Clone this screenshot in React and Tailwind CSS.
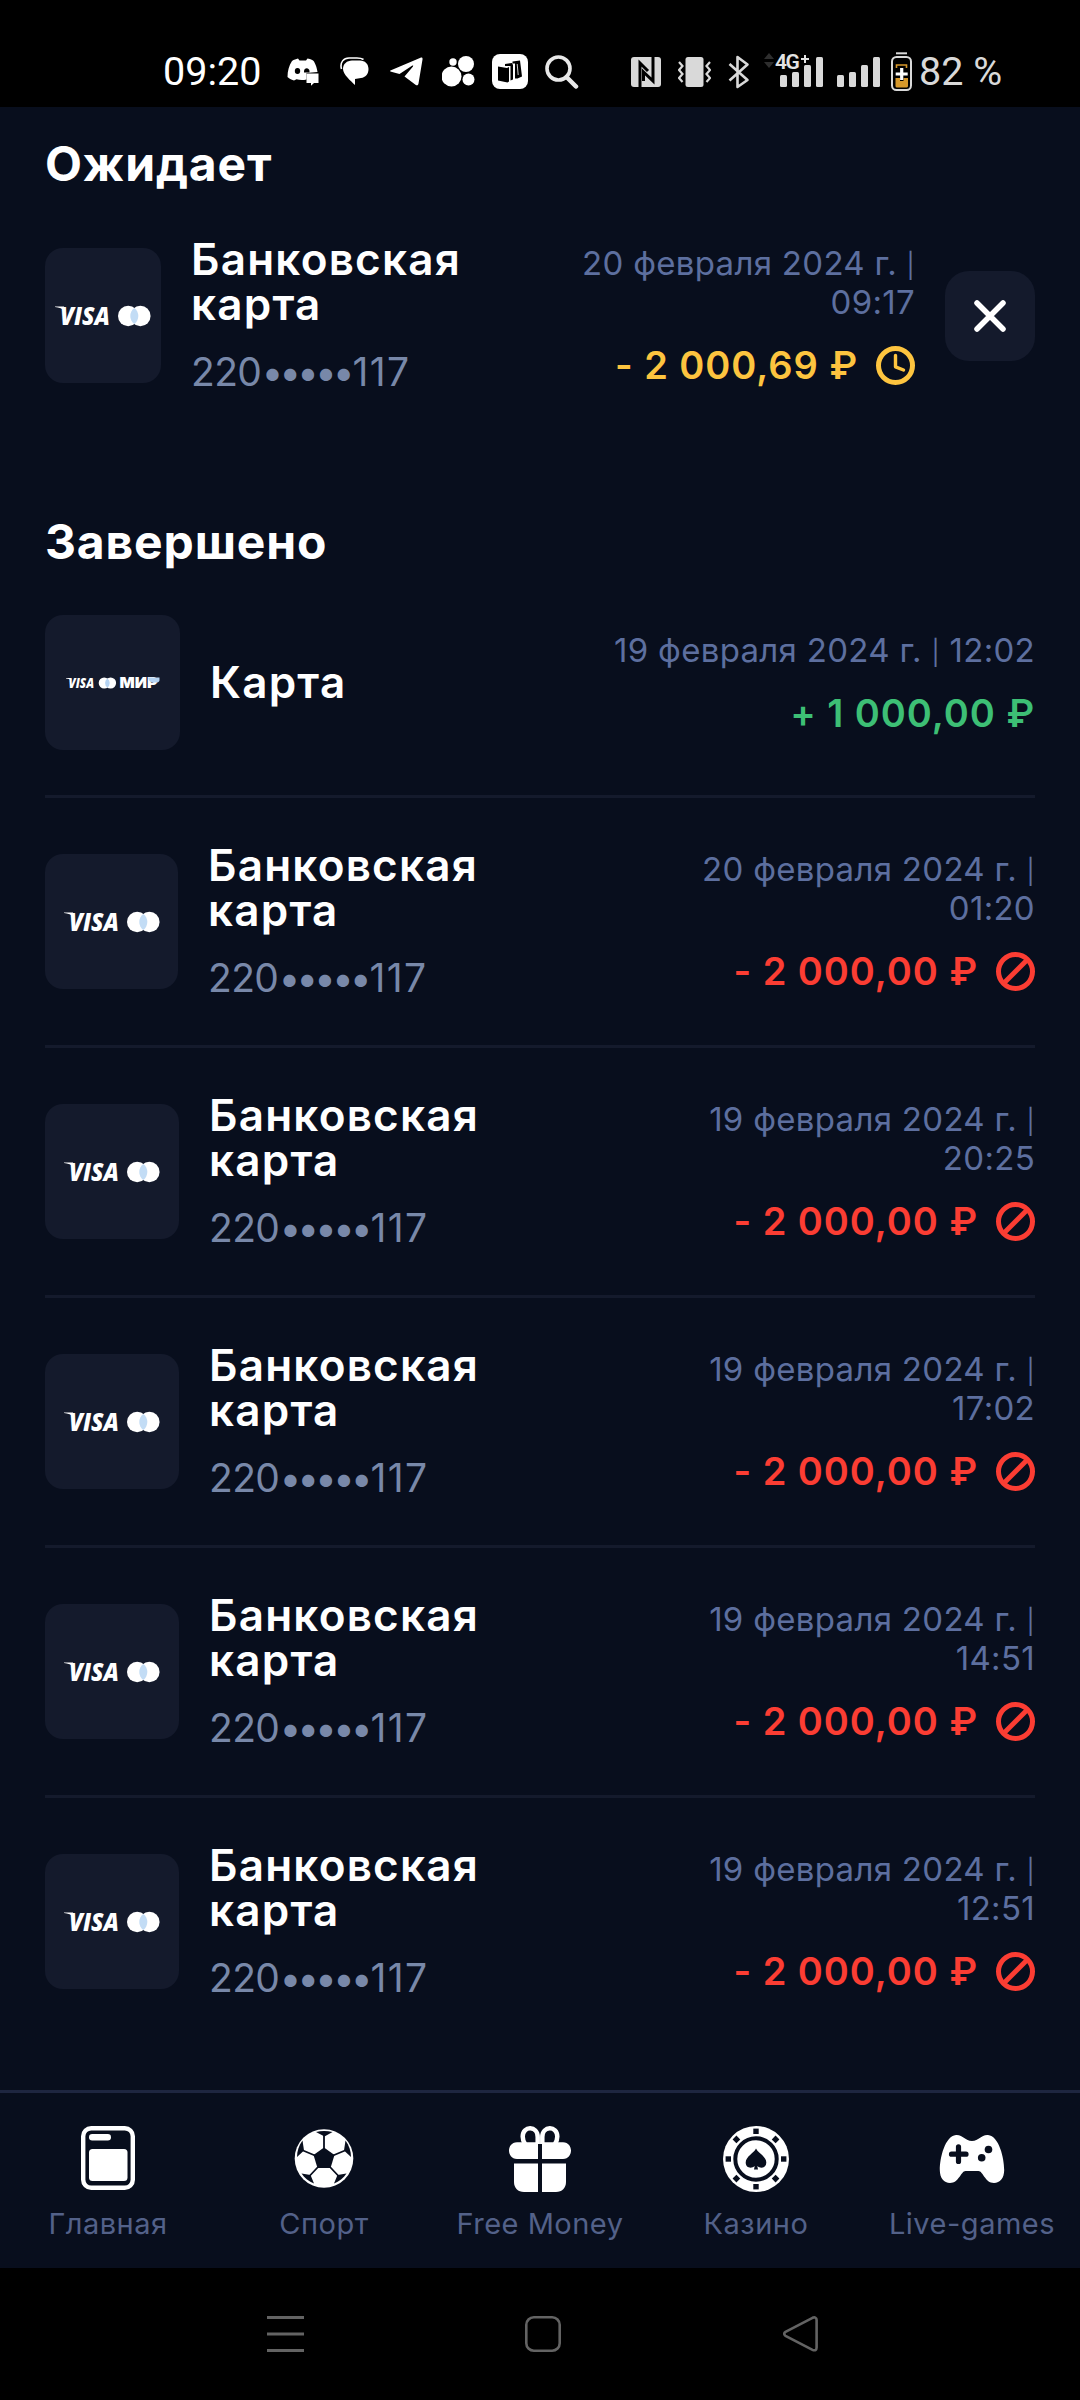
import React from 'react';
import { clsx } from 'clsx';

const COMPLETED = [
  { id: 1, date: '20 февраля 2024 г.', time: '01:20', tile: 'w-[133px]' },
  { id: 2, date: '19 февраля 2024 г.', time: '20:25', tile: 'w-[134px]' },
  { id: 3, date: '19 февраля 2024 г.', time: '17:02', tile: 'w-[134px]' },
  { id: 4, date: '19 февраля 2024 г.', time: '14:51', tile: 'w-[134px]' },
  { id: 5, date: '19 февраля 2024 г.', time: '12:51', tile: 'w-[134px]' },
];

const SignalBars = ({ className }) => (
  <svg width="43" height="30" viewBox="0 0 43 30" fill="#d9d9d9" className={className}>
    <rect x="0" y="18" width="7" height="12" rx="1.5" />
    <rect x="12" y="15" width="7" height="15" rx="1.5" />
    <rect x="24" y="8" width="7" height="22" rx="1.5" />
    <rect x="36" y="0" width="7" height="30" rx="1.5" />
  </svg>
);

const StatusBar = () => (
  <header className="flex h-[107px] items-center bg-black pt-[36px] pl-[163px] font-['Roboto'] text-white">
    <span className="w-[98px] text-[39.5px] leading-[40px] whitespace-nowrap">09:20</span>
    {/* discord */}
    <svg width="32" height="28" viewBox="0 0 32 28" className="ml-[26px]">
      <path d="M11 0.5 L12.5 2.5 H19 L20.5 0.5 C24 1 26 2 27 3.5 C29 7 30 10.5 30.5 14 L19.5 15 V21.5 C16 22.3 12.5 22.2 9.5 21.2 L7 22.5 C4 21.5 2 20.5 0.5 19 C0.5 13 2 7.5 5 3 C7 1.5 9 1 11 0.5 Z" fill="#fff" />
      <ellipse cx="10.5" cy="13" rx="2.7" ry="3" fill="#000" />
      <path d="M17 13.5 C17 9.5 22 9 22.5 13 V14.5 H17 Z" fill="#000" />
      <path d="M19.5 15.5 H31.5 V25 H27 L24 27.8 V25 H19.5 Z" fill="#fff" />
    </svg>
    {/* messages */}
    <svg width="29" height="29" viewBox="0 0 29 29" className="ml-[21px]">
      <path d="M1.5 12 C-0.5 5 4 1 9 1 H17 C20 1 22 1.5 23.5 2.5" fill="none" stroke="#fff" strokeWidth="1.6" />
      <path d="M3 12 C3 7 7 3.5 12 3.5 H20 C25 3.5 28.5 7 28.5 12 C28.500 17 25.5 20.5 21 21 L15 22 V28 C11 24 3 17.500 3 12 Z" fill="#fff" />
    </svg>
    {/* telegram */}
    <svg width="33" height="29" viewBox="0 0 33 29" fill="#fff" className="ml-[21px]">
      <path d="M1 13.2 L30.5 0.7 C32 0.2 32.8 1 32.5 2.5 L28.5 26.5 C28.2 28.4 27 28.7 25.5 27.7 L14.5 19.5 L23 9.5 C23.5 8.5 23 8.2 22 8.8 L9.5 17 L1.2 14.8 C-0.2 14.3 -0.2 13.7 1 13.2 Z" />
    </svg>
    <svg width="33" height="31" viewBox="0 0 33 31" fill="#fff" className="ml-[19px]">
      <circle cx="11" cy="6" r="3.7" />
      <circle cx="24" cy="8" r="8" />
      <circle cx="9.5" cy="20.5" r="10" />
      <circle cx="26.5" cy="23.5" r="6" />
    </svg>
    <svg width="36" height="35" viewBox="0 0 36 35" className="ml-[17px]">
      <rect width="36" height="35" rx="8" fill="#fff" />
      <path d="M6 12.5 L15 14 L17 13 V27.5 L15.500 28.5 L6 26.5 Z" fill="#000" />
      <path d="M13 10 L20 9 L21 11 V25.5 L18.500 26.5 V12 H13 Z M20.500 7.5 L28 6.500 L30 22.5 L25.500 24.5 L23 24.5 V9.500 H20.500 Z" fill="#000" />
      <path d="M25.200 10 L26.200 21" stroke="#fff" strokeWidth="0.8" />
    </svg>
    {/* search */}
    <svg width="34" height="34" viewBox="0 0 34 34" fill="none" stroke="#e8e8e8" strokeWidth="3.6" className="ml-[17px]">
      <circle cx="13.5" cy="13.5" r="11.5" />
      <path d="M21.5 22 L31 31.5" strokeWidth="4.5" strokeLinecap="round" />
    </svg>
    {/* nfc */}
    <svg width="30" height="30" viewBox="0 0 30 30" className="ml-[52px]">
      <rect width="30" height="30" rx="3" fill="#d9d9d9" />
      <path d="M9 30 V6 L17 14 M22 0 V24 L12.5 15 V24" fill="none" stroke="#000" strokeWidth="3" />
    </svg>
    {/* vibrate */}
    <svg width="33" height="30" viewBox="0 0 33 30" className="ml-[17px]">
      <rect x="7.5" width="18" height="30" rx="2.5" fill="#d9d9d9" />
      <path d="M1 5 L4.5 9 L1 13 L4.5 17 L1 21 L4.5 25 M32 5 L28.5 9 L32 13 L28.5 17 L32 21 L28.5 25" fill="none" stroke="#d9d9d9" strokeWidth="2.2" />
    </svg>
    {/* bluetooth */}
    <svg width="22" height="34" viewBox="0 0 22 34" fill="none" stroke="#d9d9d9" strokeWidth="2.6" className="ml-[17px]">
      <path d="M1.5 9 L19.5 25 L9.5 32 V2 L19.5 9.5 L1.5 25.5" strokeLinejoin="round" />
    </svg>
    <svg width="10" height="15" viewBox="0 0 10 15" fill="#2e2e2e" className="mb-[22px] ml-[14px]">
      <path d="M5 0 L10 6 H0 Z M5 15 L10 9 H0 Z" />
    </svg>
    <div className="relative ml-[6px]">
      <SignalBars />
      <span className="absolute -top-[6px] -left-[5px] text-[21px] leading-[22px] font-semibold tracking-[-1.5px] text-[#e3e3e3] [text-shadow:0_0_2px_#000,0_1px_1px_#000]">4G</span>
      <svg width="8" height="8" viewBox="0 0 8 8" className="absolute -top-[2px] left-[21px]">
        <path d="M4 0 V8 M0 4 H8" stroke="#e3e3e3" strokeWidth="2" />
      </svg>
    </div>
    <SignalBars className="ml-[14px]" />
    {/* battery */}
    <svg width="21" height="40" viewBox="0 0 21 40" className="ml-[11px]">
      <path d="M5 1.3 H16" stroke="#d9d9d9" strokeWidth="2" />
      <rect x="1" y="5" width="19" height="33" rx="4.5" fill="none" stroke="#d9d9d9" strokeWidth="2" />
      <path d="M5.5 16 V13 H15.5 V16" fill="none" stroke="#d6982a" strokeWidth="1.6" />
      <path d="M4.5 26 H9 V29 H12.5 V26 H17 V34 C17 35 16 35.5 15 35.5 H6.5 C5.5 35.5 4.5 35 4.5 34 Z" fill="#d6982a" />
      <path d="M10.7 16 V28 M4.7 22 H16.7" stroke="#fff" strokeWidth="3.2" />
    </svg>
    <span className="ml-[7px] text-[39.5px] leading-[40px] whitespace-nowrap text-[#d9d9d9]">82 %</span>
  </header>
);

const VisaMark = ({ x, y, size, width, tick }) => (
  <g fill="#fff">
    <path d={tick} />
    <text x={x} y={y} fontFamily="Open Sans" fontSize={size} fontWeight="800" fontStyle="italic" textLength={width} lengthAdjust="spacingAndGlyphs">
      VISA
    </text>
  </g>
);

const BankLogo = () => (
  <svg width="96" height="22" viewBox="0 0 96 22" className="shrink-0 overflow-visible">
    <VisaMark x="5" y="20" size="25.5" width="50" tick="M0 1.5 H9 L10 6 C7.5 3.5 4 2.5 0 2 Z" />
    <circle cx="73.2" cy="11" r="10.2" fill="#fff" />
    <circle cx="85.4" cy="11" r="10.2" fill="#fff" />
    <path d="M79.3 2.9 A10.2 10.2 0 0 1 79.3 19.1 A10.2 10.2 0 0 1 79.3 2.9 Z" fill="#c2dcf5" />
  </svg>
);

const CardLogo = () => (
  <svg width="94" height="12" viewBox="0 0 94 12" className="shrink-0 overflow-visible">
    <VisaMark x="2.5" y="11.3" size="14" width="25.5" tick="M0 1 H5 L5.5 3.5 C4 2 2 1.5 0 1.4 Z" />
    <circle cx="38.2" cy="6" r="5.5" fill="#fff" />
    <circle cx="44.6" cy="6" r="5.5" fill="#fff" />
    <path d="M41.4 1.5 A5.5 5.5 0 0 1 41.4 10.5 A5.5 5.5 0 0 1 41.4 1.5 Z" fill="#b5d3f2" />
    <text x="53.5" y="11.3" fill="#fff" fontFamily="Inter" fontSize="14.5" fontWeight="900" textLength="38" lengthAdjust="spacingAndGlyphs">
      МИР
    </text>
    <path d="M82 0.5 H93.5 V3.5 C93 5 92 5.5 90.5 5.5 H87 C84.5 5.5 82.5 3.5 82 0.5 Z" fill="#b5d3f2" />
  </svg>
);

const ClockIcon = () => (
  <svg width="39" height="39" viewBox="0 0 39 39" fill="none" stroke="#fdc43f" className="shrink-0">
    <circle cx="19.5" cy="19.5" r="17" strokeWidth="5" />
    <path d="M19.5 9.5 V20.8 L27.5 24" strokeWidth="3.4" strokeLinecap="round" strokeLinejoin="round" />
  </svg>
);

const BlockedIcon = () => (
  <svg width="39" height="39" viewBox="0 0 39 39" fill="none" stroke="#fb3d33" strokeWidth="5" className="shrink-0">
    <circle cx="19.5" cy="19.5" r="17" />
    <path d="M8 31 L31 8" />
  </svg>
);

const Tile = ({ className, children }) => (
  <div className={clsx('flex h-[135px] shrink-0 items-center justify-center rounded-[18px] bg-[#141a2c]', className)}>
    {children}
  </div>
);

const SectionTitle = ({ className, children }) => (
  <h2 className={clsx('text-[48px] leading-[60px] font-bold tracking-[0.85px] text-white', className)}>{children}</h2>
);

const BankCard = () => (
  <div className="ml-[30px] flex-1">
    <h3 className="text-[44px] leading-[45px] font-semibold tracking-[1.23px] text-white">
      Банковская
      <br />
      карта
    </h3>
    <p className="mt-[22px] flex text-[39px] leading-[45px] text-[#7888a9]">
      <span className="tracking-[-0.6px]">220</span>
      <span className="tracking-[-4.1px]">•••••</span>
      <span className="ml-[2px] tracking-[1.4px]">117</span>
    </p>
  </div>
);

const Summary = ({ date, time, inline, amount, color, icon }) => (
  <div className="flex shrink-0 flex-col items-end pb-[2px]">
    <p className="text-right text-[33px] leading-[39px] tracking-[0.3px] whitespace-nowrap text-[#5d6f9f]">
      {date} <span className="align-[1.5px] text-[24.5px] leading-none">|</span>
      {inline ? ' ' : <br />}
      {time}
    </p>
    <div className={clsx('mt-6 flex h-[39px] items-center', color)}>
      <span className="text-[38px] leading-[39px] font-semibold tracking-[0.95px] whitespace-nowrap">{amount}</span>
      {icon && <span className="ml-[18px]">{icon}</span>}
    </div>
  </div>
);

const HomeIcon = () => (
  <svg width="66" height="66" viewBox="0 0 66 66">
    <rect x="8.2" y="2.2" width="49.6" height="59.6" rx="8" fill="none" stroke="#fff" strokeWidth="4.4" />
    <rect x="14" y="8" width="22" height="6.5" rx="3.2" fill="#fff" />
    <rect x="14" y="23" width="38.5" height="32" rx="3.5" fill="#fff" />
  </svg>
);

const BallIcon = () => (
  <svg width="66" height="66" viewBox="0 0 66 66">
    <circle cx="33" cy="32.5" r="29.3" fill="#fff" />
    <g fill="#080e1d">
      <path d="M33 21.5 L43.5 29 L39.5 42 H26.5 L22.5 29 Z" />
      <path d="M25 6 C30 4.5 36 4.5 41.5 6 L33.5 10.5 Z" />
      <path d="M54.5 14.5 C58 19 60 25 60 31 L53 24.5 Z" />
      <path d="M11.5 14.5 C8 19 6 25 6 31 L13 24.5 Z" />
      <path d="M43 57.5 C48 55.5 52.5 52 55.5 47.5 L46.5 49 Z" />
      <path d="M23 57.5 C18 55.5 13.5 52 10.5 47.5 L19.5 49 Z" />
    </g>
    <path d="M33 9 V23 M42 29.5 L54 24.5 M39 41 L47.5 50 M27 41 L18.5 50 M24 29.5 L12 24.5" stroke="#080e1d" strokeWidth="1.8" />
  </svg>
);

const GiftIcon = () => (
  <svg width="66" height="66" viewBox="0 0 66 66">
    <g fill="none" stroke="#fff" strokeWidth="4.5">
      <path d="M30.7 18 V11 C30.7 -0.5 15.7 -0.5 15.7 10.5 C15.7 13 16.5 15.5 18 18" />
      <path d="M35.3 18 V11 C35.3 -0.5 50.3 -0.5 50.3 10.5 C50.3 13 49.5 15.5 48 18" />
    </g>
    <path d="M10 16.2 H31 V33 H10 C4.5 33 2 28.5 2 24.6 C2 20.7 4.5 16.2 10 16.2 Z M35 16.2 H56 C61.5 16.2 64 20.7 64 24.6 C64 28.5 61.5 33 56 33 H35 Z" fill="#fff" />
    <path d="M7 37.5 H31 V66 H17 C11 66 7 62 7 56 Z M35 37.5 H59 V56 C59 62 55 66 49 66 H35 Z" fill="#fff" />
  </svg>
);

const ChipIcon = () => (
  <svg width="66" height="66" viewBox="0 0 66 66">
    <circle cx="33" cy="33" r="33" fill="#fff" />
    <circle cx="33" cy="33" r="20.7" fill="none" stroke="#080e1d" strokeWidth="4" />
    <g fill="#080e1d">
      {[0, 45, 90, 135, 180, 225, 270, 315].map((angle) => (
        <rect key={angle} x="30.3" y="2.6" width="5.4" height="5.4" transform={`rotate(${angle} 33 33)`} />
      ))}
      <path d="M33 22.5 C35 27 43.3 30.5 43.3 36.5 C43.3 42 37.5 43 34.3 40 L35 43.5 H31 L31.7 40 C28.5 43 22.7 42 22.7 36.5 C22.7 30.5 31 27 33 22.5 Z" />
    </g>
  </svg>
);

const GamepadIcon = () => (
  <svg width="66" height="66" viewBox="0 0 66 66">
    <path d="M17 9 C24 8.5 26 15 33 15 C40 15 42 8.5 49 9 C60 10 65.2 32 65.2 44 C65.2 52 61 57 55 57 C46 57 44 45 39.5 45 H26.5 C22 45 20 57 11 57 C5 57 0.8 52 0.8 44 C0.8 32 6 10 17 9 Z" fill="#fff" />
    <path d="M19.5 20.8 V35.5 M12.5 28.2 H27" stroke="#080e1d" strokeWidth="5.2" strokeLinecap="round" />
    <circle cx="49.5" cy="23.5" r="3.8" fill="#080e1d" />
    <circle cx="42.7" cy="31.8" r="3.8" fill="#080e1d" />
  </svg>
);

const TABS = [
  { label: 'Главная', icon: HomeIcon },
  { label: 'Спорт', icon: BallIcon },
  { label: 'Free Money', icon: GiftIcon },
  { label: 'Казино', icon: ChipIcon },
  { label: 'Live-games', icon: GamepadIcon },
];

const TabBar = () => (
  <nav className="grid h-[178px] shrink-0 grid-cols-5 border-t-3 border-[#1e2640] pt-[33px]">
    {TABS.map(({ label, icon: Icon }) => (
      <a key={label} className="flex flex-col items-center">
        <Icon />
        <span className="mt-[14px] text-[29px] leading-[36px] tracking-[0.5px] whitespace-nowrap text-[#536189]">{label}</span>
      </a>
    ))}
  </nav>
);

const SystemNav = () => (
  <footer className="flex h-[132px] items-center bg-black pl-[267px]">
    <svg width="37" height="36" viewBox="0 0 37 36" fill="none" stroke="#636363" strokeWidth="3">
      <path d="M0 1.5 H37 M0 18 H37 M0 34.5 H37" />
    </svg>
    <svg width="36" height="36" viewBox="0 0 36 36" fill="none" stroke="#636363" strokeWidth="2.6" className="ml-[221px]">
      <rect x="1.3" y="1.3" width="33.4" height="33.4" rx="7.5" />
    </svg>
    <svg width="35" height="36" viewBox="0 0 35 36" fill="none" stroke="#636363" strokeWidth="2.6" className="ml-[222px]">
      <path d="M2.5 15.8 L29.5 1.8 C32 0.7 33.6 2 33.6 4 V31.5 C33.6 34 32 35 29.5 33.8 L2.5 19.8 C0.8 18.8 0.8 16.8 2.5 15.8 Z" />
    </svg>
  </footer>
);

export default function App() {
  return (
    <div className="flex h-[2400px] w-[1080px] flex-col bg-[#080e1d] font-['Inter',sans-serif]">
      <StatusBar />
      <main className="flex-1 px-[45px] pt-[27px]">
        <SectionTitle>Ожидает</SectionTitle>
        <div className="mt-[43px] flex h-[157px] items-center">
          <Tile className="w-[116px]">
            <BankLogo />
          </Tile>
          <BankCard />
          <Summary date="20 февраля 2024 г." time="09:17" amount="- 2 000,69 ₽" color="text-[#fdc43f]" icon={<ClockIcon />} />
          <button className="ml-[30px] flex size-[90px] shrink-0 items-center justify-center rounded-[24px] bg-[#141a2c]">
            <svg width="32" height="32" viewBox="0 0 32 32" fill="none" stroke="#fff" strokeWidth="5.5" strokeLinecap="round">
              <path d="M3 3 L29 29 M29 3 L3 29" />
            </svg>
          </button>
        </div>

        <SectionTitle className="mt-[118px]">Завершено</SectionTitle>
        <div className="mt-[43px] flex h-[180px] items-center pb-[45px]">
          <Tile className="w-[135px]">
            <CardLogo />
          </Tile>
          <h3 className="ml-[30px] flex-1 text-[44px] leading-[45px] font-semibold tracking-[1.23px] text-white">Карта</h3>
          <Summary date="19 февраля 2024 г." time="12:02" inline amount="+ 1 000,00 ₽" color="text-[#3dbf75]" />
        </div>
        {COMPLETED.map((row) => (
          <div key={row.id} className="flex h-[250px] items-center border-t-3 border-[#141a2c]">
            <Tile className={row.tile}>
              <BankLogo />
            </Tile>
            <BankCard />
            <Summary date={row.date} time={row.time} amount="- 2 000,00 ₽" color="text-[#fb3d33]" icon={<BlockedIcon />} />
          </div>
        ))}
      </main>
      <TabBar />
      <SystemNav />
    </div>
  );
}
